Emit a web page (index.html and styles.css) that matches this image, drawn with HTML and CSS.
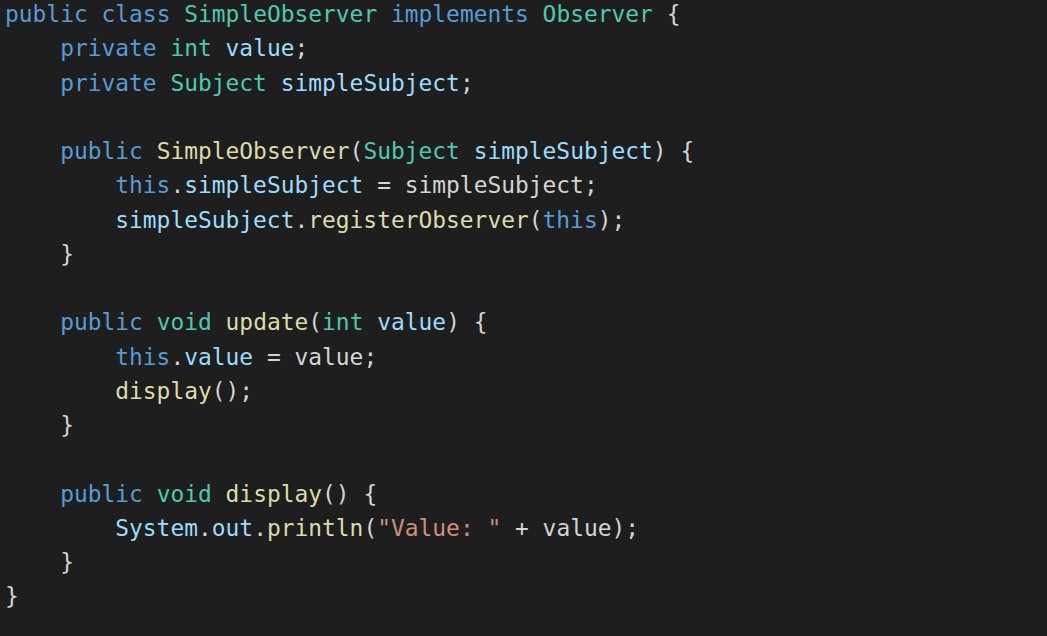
FILE: index.html
```html
<!DOCTYPE html>
<html>
<head>
<meta charset="utf-8">
<link rel="stylesheet" href="styles.css">
</head>
<body>
<pre class="code"><span class="kw">public</span> <span class="kw">class</span> <span class="ty">SimpleObserver</span> <span class="kw">implements</span> <span class="ty">Observer</span> {
    <span class="kw">private</span> <span class="ty">int</span> <span class="va">value</span>;
    <span class="kw">private</span> <span class="ty">Subject</span> <span class="va">simpleSubject</span>;

    <span class="kw">public</span> <span class="fn">SimpleObserver</span>(<span class="ty">Subject</span> <span class="va">simpleSubject</span>) {
        <span class="kw">this</span>.<span class="va">simpleSubject</span> = simpleSubject;
        <span class="va">simpleSubject</span>.<span class="fn">registerObserver</span>(<span class="kw">this</span>);
    }

    <span class="kw">public</span> <span class="ty">void</span> <span class="fn">update</span>(<span class="ty">int</span> <span class="va">value</span>) {
        <span class="kw">this</span>.<span class="va">value</span> = value;
        <span class="fn">display</span>();
    }

    <span class="kw">public</span> <span class="ty">void</span> <span class="fn">display</span>() {
        <span class="va">System</span>.<span class="va">out</span>.<span class="fn">println</span>(<span class="st">"Value: "</span> + value);
    }
}</pre>
</body>
</html>
```
FILE: styles.css
```css
html, body {
  margin: 0;
  padding: 0;
  background: #1e1e1e;
  height: 100%;
  overflow: hidden;
}
.code {
  margin: -3px 0 0 0;
  padding: 0 0 0 5px;
  font-family: "DejaVu Sans Mono", monospace;
  font-size: 22.9px;
  line-height: 34.25px;
  color: #d4d4d4;
  white-space: pre;
}
.kw { color: #569cd6; }
.ty { color: #4ec9b0; }
.va { color: #9cdcfe; }
.fn { color: #dcdcaa; }
.st { color: #ce9178; }
```
